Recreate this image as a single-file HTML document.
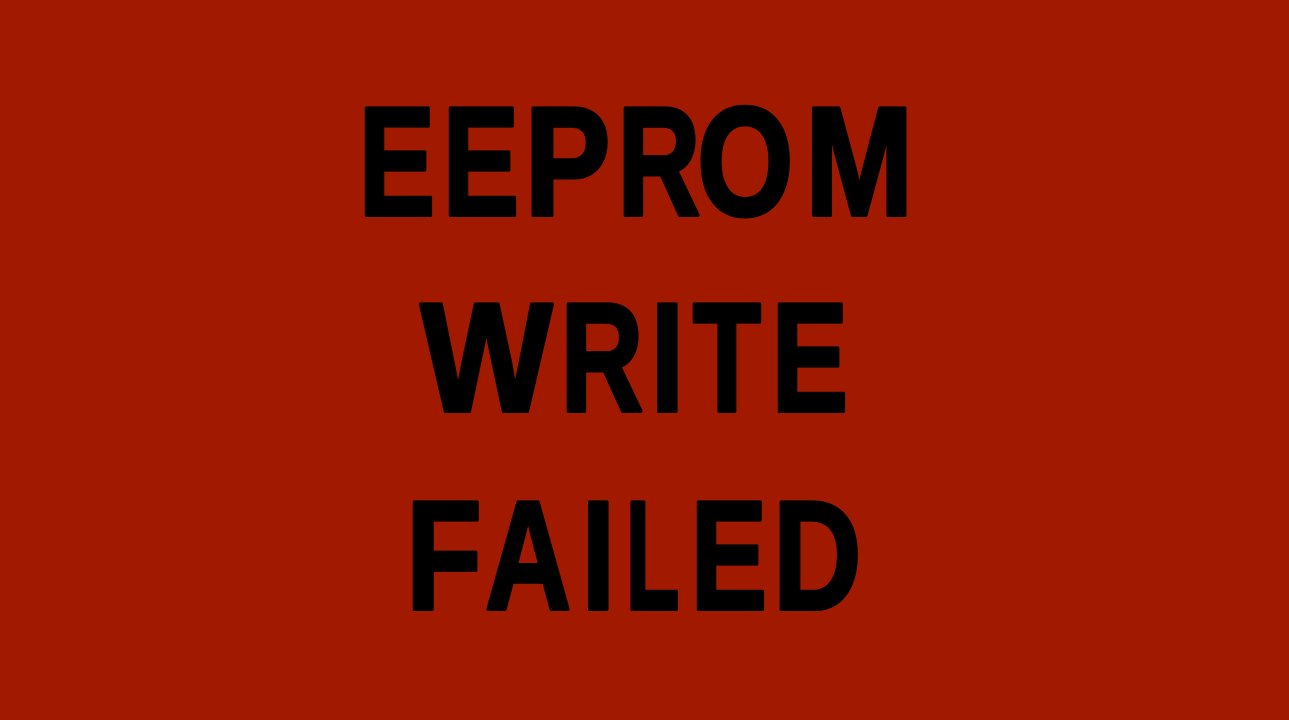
<!DOCTYPE html>
<html><head><meta charset="utf-8"><style>
html,body{margin:0;padding:0;width:1289px;height:720px;overflow:hidden;background:#a11a00;}
svg{display:block}
text{font-family:"Liberation Sans",sans-serif;font-weight:bold;font-size:155px;fill:#000;stroke:#000;stroke-width:4;stroke-linejoin:round}
</style></head><body>
<svg width="1289" height="720" viewBox="0 0 1289 720">
<rect width="1289" height="720" fill="#a11a00"/>
<g>
<text transform="translate(358.6,215) scale(0.74,1)">E</text>
<text transform="translate(442.6,215) scale(0.74,1)">E</text>
<text transform="translate(524.6,215) scale(0.83,1)">P</text>
<text transform="translate(617.5,215) scale(0.74,1)">R</text>
<text transform="translate(697,215) scale(0.80,1)">O</text>
<text transform="translate(805,215) scale(0.84,1)">M</text>
</g>
<g>
<text transform="translate(420.6,411) scale(0.90,1)">W</text>
<text transform="translate(560.5,411) scale(0.74,1)">R</text>
<text transform="translate(650.5,411) scale(0.78,1)">I</text>
<text transform="translate(692.8,411) scale(0.72,1)">T</text>
<text transform="translate(771.6,411) scale(0.74,1)">E</text>
</g>
<g>
<text transform="translate(406,609) scale(0.80,1)">F</text>
<text transform="translate(485,609) scale(0.77,1)">A</text>
<text transform="translate(581.5,609) scale(0.78,1)">I</text>
<text transform="translate(625.6,609) scale(0.57,1)">L</text>
<text transform="translate(690.6,609) scale(0.74,1)">E</text>
<text transform="translate(773,609) scale(0.79,1)">D</text>
</g>
</svg>
</body></html>
